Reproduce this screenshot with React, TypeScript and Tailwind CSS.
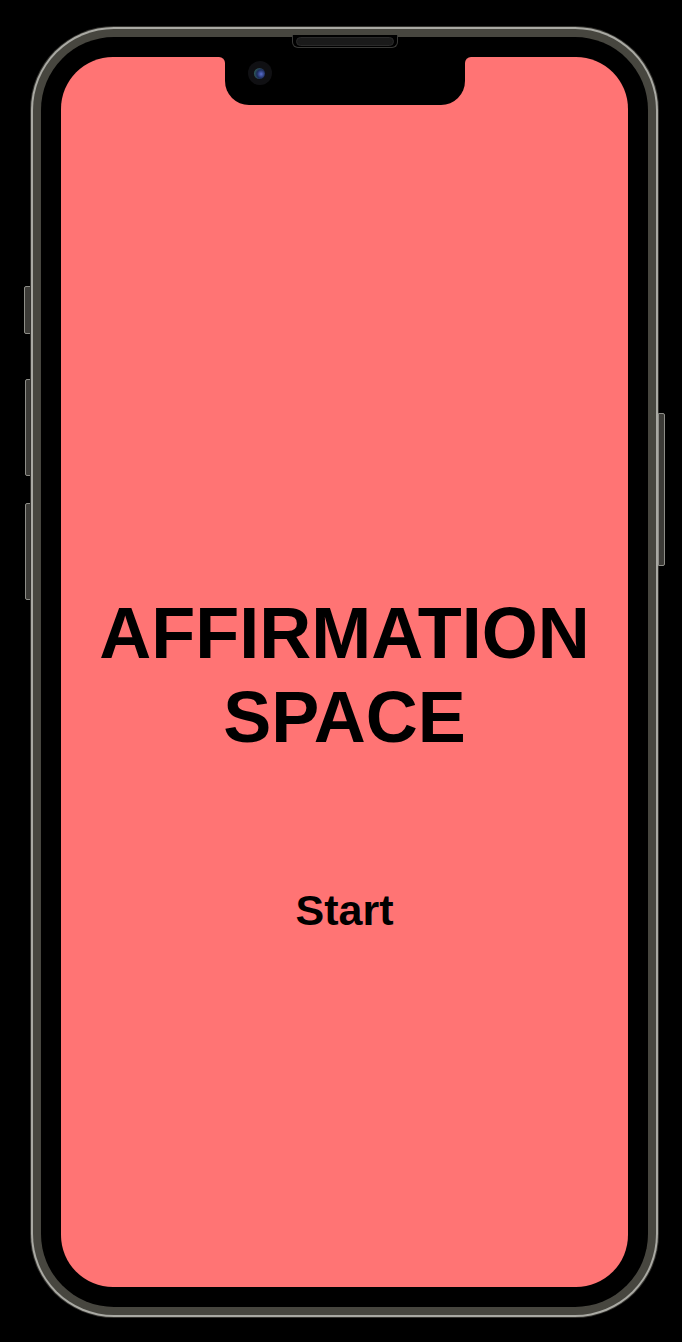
export default function App() {
  return (
    <div className="flex min-h-[1342px] w-full items-start bg-black pt-[26px] pl-[24px]">
      {/* left side buttons */}
      <div className="flex w-[6px] flex-col pt-[260px]">
        <div className="h-[48px] w-[7px] rounded-l-[2px] border border-[#8d8d87] bg-[#3c3b37]" />
        <div className="mt-[45px] ml-[1px] h-[97px] w-[6px] rounded-l-[2px] border border-[#8d8d87] bg-[#3c3b37]" />
        <div className="mt-[27px] ml-[1px] h-[97px] w-[6px] rounded-l-[2px] border border-[#8d8d87] bg-[#3c3b37]" />
      </div>

      {/* frame */}
      <div className="h-[1292px] w-[629px] shrink-0 rounded-[84px] bg-[#34332f] p-[1px]">
        <div className="h-full rounded-[83px] bg-[#a9a9a3] p-[2px]">
          <div className="h-full rounded-[81px] bg-[#47463f] p-[8px]">
            <div className="relative h-full rounded-[73px] bg-black p-[20px]">
              {/* speaker */}
              <div className="absolute left-[251px] top-[-2px] z-10 h-[13px] w-[106px] rounded-b-[6px] border border-t-0 border-[#3a3a38] bg-black px-[3px] pt-[2px]">
                <div className="h-[9px] w-full rounded-full border border-[#2a2a2a] bg-[#1a1a1a]" />
              </div>

              {/* screen */}
              <div className="relative flex h-full flex-col items-center overflow-hidden rounded-[52px] bg-[#ff7474] font-['Liberation_Sans',Arial,sans-serif] text-black">
                {/* notch */}
                <div className="relative flex h-[48px] w-[240px] shrink-0 items-start rounded-b-[24px] bg-black pt-[4px] pl-[23px]">
                  <div className="absolute left-[-6px] top-0 h-[6px] w-[6px] bg-black">
                    <div className="h-full w-full rounded-tr-[6px] bg-[#ff7474]" />
                  </div>
                  <div className="absolute right-[-6px] top-0 h-[6px] w-[6px] bg-black">
                    <div className="h-full w-full rounded-tl-[6px] bg-[#ff7474]" />
                  </div>
                  <div className="flex h-[24px] w-[24px] items-center justify-center rounded-full bg-[#101013]">
                    <div className="h-[11px] w-[11px] rounded-full bg-[radial-gradient(circle_at_65%_55%,#5a6fd0_0%,#1c2a5a_45%,#2f5a55_75%,#0b0d14_100%)]" />
                  </div>
                </div>

                <h1 className="mt-[486px] text-center text-[72px] font-bold leading-[84px]">
                  AFFIRMATION
                  <br />
                  SPACE
                </h1>
                <button className="mt-[127px] text-[43px] font-bold leading-[48px]">Start</button>
              </div>
            </div>
          </div>
        </div>
      </div>

      {/* right side button */}
      <div className="flex w-[7px] flex-col pt-[387px]">
        <div className="-ml-[1px] h-[153px] w-[7px] rounded-r-[2px] border border-[#8d8d87] bg-[#3c3b37]" />
      </div>
    </div>
  )
}
